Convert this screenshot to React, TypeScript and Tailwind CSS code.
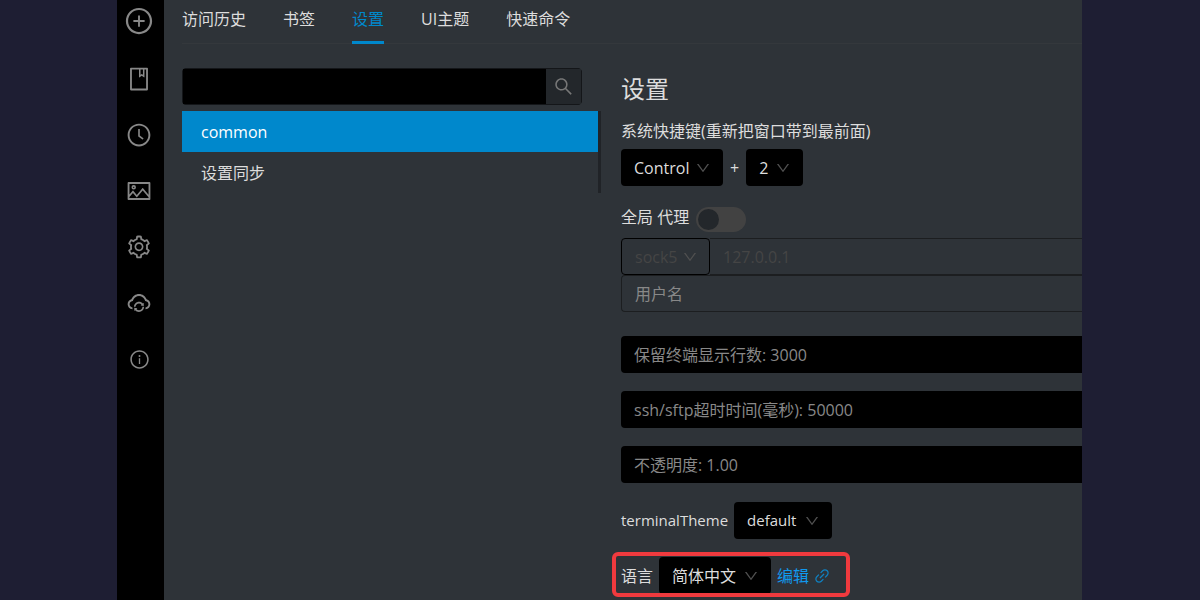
import { useState } from "react";
import type { ReactNode } from "react";
import {
  AiOutlineBook,
  AiOutlineClockCircle,
  AiOutlineCloudSync,
  AiOutlineDown,
  AiOutlineInfoCircle,
  AiOutlineLink,
  AiOutlinePicture,
  AiOutlinePlusCircle,
  AiOutlineSearch,
  AiOutlineSetting,
} from "react-icons/ai";

const navItems = [
  { label: "新建", icon: <AiOutlinePlusCircle size={30} /> },
  { label: "书签", icon: <AiOutlineBook size={26} /> },
  { label: "访问历史", icon: <AiOutlineClockCircle size={26} /> },
  { label: "UI主题", icon: <AiOutlinePicture size={26} /> },
  { label: "设置", icon: <AiOutlineSetting size={26} /> },
  { label: "设置同步", icon: <AiOutlineCloudSync size={26} /> },
  { label: "关于", icon: <AiOutlineInfoCircle size={21} /> },
];

const tabs = ["访问历史", "书签", "设置", "UI主题", "快速命令"];

function Select({
  label,
  value,
  className,
  tone = "bg-black text-[#dddddd]",
  disabled = false,
}: {
  label: string;
  value: string;
  className: string;
  tone?: string;
  disabled?: boolean;
}) {
  return (
    <span className={`relative inline-flex shrink-0 ${className}`}>
      <select
        aria-label={label}
        disabled={disabled}
        defaultValue={value}
        className={`h-[37px] w-full appearance-none rounded-sm pl-[13px] opacity-100 outline-none ${tone}`}
      >
        <option>{value}</option>
      </select>
      <AiOutlineDown
        size={16}
        className="pointer-events-none absolute top-[11px] right-3 text-[#505050]"
      />
    </span>
  );
}

function Field({ label, value }: { label: string; value: string }) {
  return (
    <input
      aria-label={label}
      defaultValue={value}
      className="h-[37px] w-full rounded-l-sm bg-black px-[13px] pb-0.5 text-[#888888] outline-none"
    />
  );
}

function Row({ children }: { children: ReactNode }) {
  return <div className="flex items-center gap-1.5">{children}</div>;
}

export default function App() {
  const [item, setItem] = useState("common");
  return (
    <div className="flex h-screen overflow-hidden bg-[#1e1e33] pr-[118px] pl-[117px] font-['Open_Sans','Noto_Sans_CJK_SC',sans-serif] text-base text-[#dddddd]">
      <nav className="flex w-[47px] shrink-0 flex-col items-center bg-black pr-[3px] text-[#888888]">
        {navItems.map((n, i) => (
          <button
            key={n.label}
            aria-label={n.label}
            className={`flex w-full shrink-0 items-center justify-center ${i === 0 ? "mb-[3px] h-[42px]" : "mt-3 h-11"}`}
          >
            {n.icon}
          </button>
        ))}
      </nav>

      <div className="min-w-0 flex-1 overflow-hidden bg-[#2e3338] pl-[18px]">
        <div className="flex h-11 gap-[37px] border-b border-[#34383c]">
          {tabs.map((t) => (
            <button
              key={t}
              className={`-mb-px h-11 shrink-0 border-b-[3px] pb-1 leading-6 ${
                t === "设置" ? "border-[#0088cc] text-[#0088cc]" : "border-transparent"
              }`}
            >
              {t}
            </button>
          ))}
        </div>

        <div className="flex">
          <aside className="w-[419px] shrink-0 pt-6">
            <div className="mr-[19px] flex h-[37px] rounded-sm border border-[#141619] bg-black">
              <input aria-label="搜索" className="min-w-0 flex-1 bg-black px-3 outline-none" />
              <button
                aria-label="搜索"
                className="flex w-[35px] items-center justify-center bg-[#23272b] text-[#777777]"
              >
                <AiOutlineSearch size={21} />
              </button>
            </div>
            <ul className="mt-1.5 border-r-[3px] border-[#202327]">
              {["common", "设置同步"].map((name) => (
                <li key={name}>
                  <button
                    onClick={() => setItem(name)}
                    className={`h-[41px] w-full px-[19px] pt-px text-left ${
                      item === name ? "bg-[#0088cc] text-white" : ""
                    }`}
                  >
                    {name}
                  </button>
                </li>
              ))}
            </ul>
          </aside>

          <main className="min-w-0 flex-1 pt-[29px] pl-5">
            <h1 className="text-2xl leading-8">设置</h1>
            <p className="mt-3.5 leading-6">系统快捷键(重新把窗口带到最前面)</p>
            <div className="mt-1.5 flex items-center gap-[7px]">
              <Select label="修饰键" value="Control" className="w-[102px]" />
              <span>+</span>
              <Select label="按键" value="2" className="w-[57px]" />
            </div>

            <div className="mt-[21px] flex h-[25px] gap-[7px]">
              <label htmlFor="proxy" className="-mt-0.5 leading-6">
                全局 代理
              </label>
              <input
                id="proxy"
                type="checkbox"
                role="switch"
                className="h-[25px] w-[50px] appearance-none rounded-full bg-[#424242] p-0.5 before:block before:size-[21px] before:rounded-full before:bg-[#23272b] checked:bg-[#0088cc] checked:before:ml-[25px]"
              />
            </div>
            <div className="mt-1.5 flex">
              <Select
                label="代理类型"
                value="sock5"
                className="w-[89px]"
                tone="border border-black bg-transparent text-[#454545] pl-3"
                disabled
              />
              <input
                aria-label="代理地址"
                disabled
                placeholder="127.0.0.1"
                className="h-[37px] min-w-0 flex-1 border-y border-[#1c1e20] px-[13px] placeholder:text-[#454545]"
              />
            </div>
            <input
              aria-label="用户名"
              placeholder="用户名"
              className="block h-[37px] w-full rounded-l-sm border border-r-0 border-[#1c1e20] px-[13px] outline-none placeholder:text-[#888888]"
            />

            <div className="mt-6 flex flex-col gap-[18px]">
              <Field label="保留终端显示行数" value="保留终端显示行数: 3000" />
              <Field label="ssh/sftp超时时间" value="ssh/sftp超时时间(毫秒): 50000" />
              <Field label="不透明度" value="不透明度: 1.00" />
              <div className="pt-px text-[15px]">
                <Row>
                  <span>terminalTheme</span>
                  <Select label="terminalTheme" value="default" className="w-[98px]" />
                </Row>
              </div>
              <div className="relative w-fit">
                <Row>
                  <span>语言</span>
                  <Select label="语言" value="简体中文" className="w-28" />
                  <a href="#edit" className="flex items-center gap-1 text-[#1199ee]">
                    编辑
                    <AiOutlineLink size={18} className="text-[#1080c0]" />
                  </a>
                </Row>
                <div className="pointer-events-none absolute -top-[5px] -right-[19px] -bottom-[3px] -left-[9px] rounded-md border-4 border-[#f03a3e]" />
              </div>
            </div>
          </main>
        </div>
      </div>
    </div>
  );
}
